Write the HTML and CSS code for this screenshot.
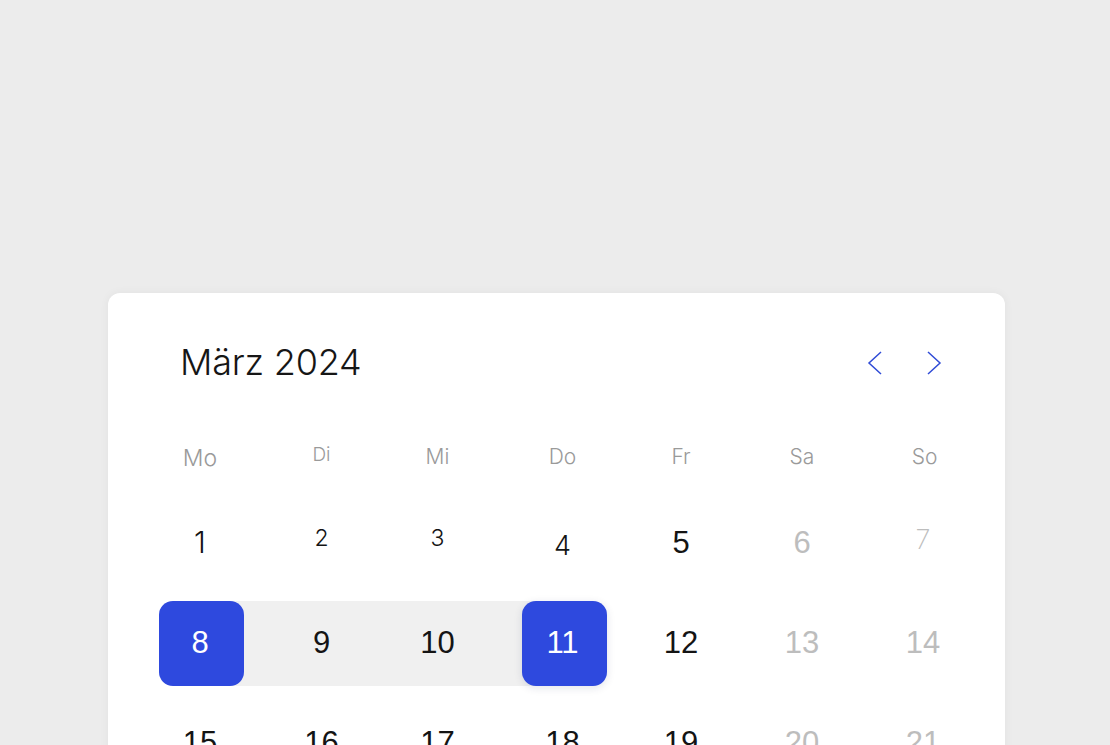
FILE: index.html
```html
<!DOCTYPE html>
<html lang="de">
<head>
<meta charset="utf-8">
<title>Kalender</title>
<link rel="stylesheet" href="styles.css">
</head>
<body>
<main class="stage">
  <section class="card">
    <header class="cal-head">
      <h1 class="title">März 2024</h1>
      <nav class="nav">
        <button class="nav-btn" aria-label="Vorheriger Monat">
          <svg width="16" height="24" viewBox="0 0 16 24"><path d="M14 1 L2 12 L14 23" fill="none" stroke="#2f4bd6" stroke-width="1.5"/></svg>
        </button>
        <button class="nav-btn" aria-label="Nächster Monat">
          <svg width="16" height="24" viewBox="0 0 16 24"><path d="M2 1 L14 12 L2 23" fill="none" stroke="#2f4bd6" stroke-width="1.5"/></svg>
        </button>
      </nav>
    </header>

    <div class="weekdays">
      <span class="wd wd-lg">Mo</span>
      <span class="wd wd-sm">Di</span>
      <span class="wd wd-md">Mi</span>
      <span class="wd wd-md">Do</span>
      <span class="wd wd-md">Fr</span>
      <span class="wd wd-md">Sa</span>
      <span class="wd wd-md">So</span>
    </div>

    <div class="days">
      <div class="col"><span class="day geo big">1</span></div>
      <div class="col"><span class="day geo small up">2</span></div>
      <div class="col"><span class="day geo small up">3</span></div>
      <div class="col"><span class="day geo mid down">4</span></div>
      <div class="col"><span class="day grot">5</span></div>
      <div class="col"><span class="day grot muted">6</span></div>
      <div class="col"><span class="day geo thin muted up7">7</span></div>

      <div class="col range-start"><span class="day grot sel">8</span></div>
      <div class="col range-in"><span class="day grot">9</span></div>
      <div class="col range-in"><span class="day grot">10</span></div>
      <div class="col range-end"><span class="day grot sel shadow">11</span></div>
      <div class="col"><span class="day grot">12</span></div>
      <div class="col"><span class="day grot muted">13</span></div>
      <div class="col"><span class="day grot muted">14</span></div>

      <div class="col"><span class="day grot">15</span></div>
      <div class="col"><span class="day grot">16</span></div>
      <div class="col"><span class="day grot">17</span></div>
      <div class="col"><span class="day grot">18</span></div>
      <div class="col"><span class="day grot">19</span></div>
      <div class="col"><span class="day grot muted">20</span></div>
      <div class="col"><span class="day grot muted">21</span></div>

      <div class="col"><span class="day grot">22</span></div>
      <div class="col"><span class="day grot">23</span></div>
      <div class="col"><span class="day grot">24</span></div>
      <div class="col"><span class="day grot">25</span></div>
      <div class="col"><span class="day grot">26</span></div>
      <div class="col"><span class="day grot muted">27</span></div>
      <div class="col"><span class="day grot muted">28</span></div>
    </div>
  </section>
</main>
</body>
</html>
```

FILE: styles.css
```css
html, body {
  margin: 0;
  padding: 0;
  height: 100%;
  overflow: hidden;
  background: #ececec;
}

.stage {
  padding: 293px 105px 0 108px;
}

.card {
  width: 897px;
  background: #ffffff;
  border-radius: 12px;
  box-shadow: 0 0 10px rgba(0, 0, 0, 0.05);
  padding: 41px 17px 40px 33px;
  box-sizing: border-box;
  min-height: 700px;
}

.cal-head {
  height: 56px;
  display: flex;
  align-items: center;
  justify-content: space-between;
  padding: 0 46px 0 39px;
}

.title {
  margin: 0;
  font-family: "Inter", "Liberation Sans", sans-serif;
  font-weight: 300;
  font-size: 36px;
  letter-spacing: -0.2px;
  color: #161616;
}

.nav {
  display: flex;
  gap: 43px;
  padding-top: 2px;
}

.nav-btn {
  border: 0;
  background: none;
  padding: 0;
  width: 16px;
  height: 24px;
  display: flex;
  cursor: pointer;
}

.weekdays {
  margin-top: 47px;
  height: 40px;
  display: grid;
  grid-template-columns: repeat(7, 121px);
  align-items: center;
  justify-items: center;
  color: #9a9a9a;
  font-family: "Inter", "Liberation Sans", sans-serif;
  font-weight: 300;
}

.wd {
  box-sizing: border-box;
}

.wd-lg { font-size: 23px; padding-top: 1px; }
.wd-sm { font-size: 19px; margin-top: -5px; }
.wd-md { font-size: 21px; margin-top: -2px; }

.days {
  margin-top: 24px;
  display: grid;
  grid-template-columns: repeat(7, 121px);
  grid-auto-rows: 85px;
  row-gap: 15px;
}

.col {
  display: flex;
  justify-content: center;
  align-items: stretch;
}

.range-in { background: #f0f0f0; }
.range-start { background: linear-gradient(to right, transparent 50%, #f0f0f0 50%); }
.range-end { background: linear-gradient(to right, #f0f0f0 50%, transparent 50%); }

.day {
  width: 85px;
  box-sizing: border-box;
  display: flex;
  align-items: center;
  justify-content: center;
  color: #141414;
  border-radius: 14px;
}

/* optical nudges per weekday column */
.weekdays .wd:nth-child(7n+1), .days .col:nth-child(7n+1) .day { padding-right: 3px; }
.weekdays .wd:nth-child(7n+2), .days .col:nth-child(7n+2) .day { padding-right: 2px; }
.weekdays .wd:nth-child(7n+3), .days .col:nth-child(7n+3) .day { padding-right: 12px; }
.weekdays .wd:nth-child(7n+4), .days .col:nth-child(7n+4) .day { padding-right: 4px; }
.weekdays .wd:nth-child(7n+5), .days .col:nth-child(7n+5) .day { padding-right: 9px; }
.weekdays .wd:nth-child(7n+6), .days .col:nth-child(7n+6) .day { padding-right: 9px; }
.weekdays .wd:nth-child(7n+7), .days .col:nth-child(7n+7) .day { padding-right: 9px; }
.weekdays .wd:nth-child(7) { padding-right: 6px; }

.geo {
  font-family: "Inter", "Liberation Sans", sans-serif;
  font-weight: 300;
}
.geo.big { font-size: 30px; padding-bottom: 4px; }
.geo.small { font-size: 23px; }
.geo.mid { font-size: 27px; }
.geo.thin { font-size: 27px; font-weight: 200; }
.up { padding-bottom: 11px; }
.up7 { padding-bottom: 8px; }
.down { padding-top: 3px; }

.grot {
  font-family: "Liberation Sans", "Inter", sans-serif;
  font-size: 31px;
  font-weight: 400;
  padding-bottom: 2px;
}

.muted { color: #bdbdbd; }

.sel {
  background: #2e49de;
  color: #ffffff;
}

.shadow {
  box-shadow: 0 2px 8px rgba(20, 30, 80, 0.12);
}
```
